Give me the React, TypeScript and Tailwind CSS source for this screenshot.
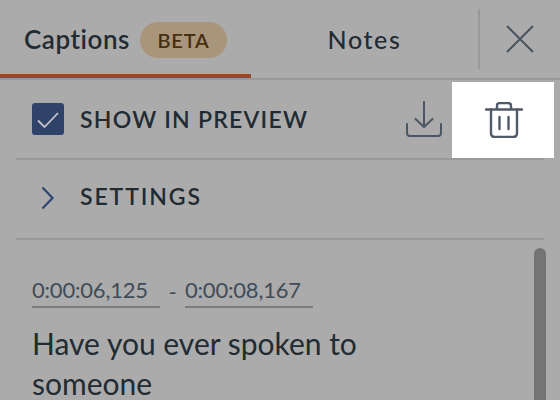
import React from 'react';

const Check = () => (
  <svg width="32" height="32" viewBox="0 0 32 32" fill="none" stroke="#c3c6cb" strokeWidth="1.8">
    <path d="M6 17.5 L12.5 24 L26 10" />
  </svg>
);

const Chevron = () => (
  <svg width="14" height="24" viewBox="0 0 14 24" fill="none" stroke="#2f4570" strokeWidth="2.2">
    <path d="M1.5 1.5 L11.5 12 L1.5 22.5" />
  </svg>
);

const CloseIcon = () => (
  <svg width="28" height="28" viewBox="0 0 28 28" fill="none" stroke="#4b5662" strokeWidth="2.2">
    <path d="M1 1 L27 27 M27 1 L1 27" />
  </svg>
);

const DownloadIcon = () => (
  <svg width="36" height="36" viewBox="0 0 36 36" fill="none" stroke="#4b5662" strokeWidth="2" strokeLinecap="round" strokeLinejoin="round">
    <path d="M18 1 V26 M9.5 18 L18 26 L26.5 18" />
    <path d="M1 23 V32 Q1 35 4 35 H32 Q35 35 35 32 V23" />
  </svg>
);

const TrashIcon = () => (
  <svg width="38" height="36" viewBox="0 0 38 36" fill="none" stroke="#4f5b68" strokeWidth="2.4" strokeLinecap="round" strokeLinejoin="round">
    <path d="M1 7.5 H37" />
    <path d="M6 7.5 V31 Q6 35 10 35 H28 Q32 35 32 31 V7.5" />
    <path d="M12 7 V4 Q12 1 15 1 H23 Q26 1 26 4 V7" />
    <path d="M14.5 15 V27 M23.5 15 V27" />
  </svg>
);

export default function App() {
  return (
    <div className="w-[560px] h-[400px] overflow-hidden bg-[#ababab] text-[#222b33] font-['Lato','Noto_Sans',sans-serif]">
      <div className="flex h-[80px] border-b-2 border-[#999999]">
        <div className="w-[251px] h-[78px] border-b-4 border-[#96492a] flex items-center pl-[24px] gap-[10px] pt-[5px]">
          <span className="text-[26px] font-semibold tracking-[0.55px]">Captions</span>
          <span className="w-[87px] h-[36px] rounded-full bg-[#a8957a] text-[#47300f] text-[20px] font-semibold tracking-[0.8px] flex items-center justify-center">
            BETA
          </span>
        </div>
        <div className="w-[227px] flex items-center justify-center pt-[2px]">
          <span className="text-[25px] font-medium tracking-[1.6px]">Notes</span>
        </div>
        <div className="flex-1 flex items-start pt-[9px]">
          <div className="w-[2px] h-[60px] bg-[#999999]" />
          <div className="ml-[26px] mt-[16px]">
            <CloseIcon />
          </div>
        </div>
      </div>

      <div className="mx-4 h-[80px] border-b-2 border-[#999999] flex items-start pl-4">
        <div className="mt-[23px] w-8 h-8 rounded-[3px] bg-[#2f4369]">
          <Check />
        </div>
        <span className="ml-4 mt-[23px] text-[23px] leading-[32px] font-semibold tracking-[1.25px] whitespace-nowrap">SHOW IN PREVIEW</span>
        <div className="ml-auto mt-[21px] mr-[10px]">
          <DownloadIcon />
        </div>
        <button className="mt-[2px] mr-[-10px] w-[102px] h-[76px] bg-white flex items-center justify-center pl-[1px]">
          <TrashIcon />
        </button>
      </div>

      <div className="mx-4 h-[80px] border-b-2 border-[#999999] flex items-center pl-[25px] pb-[2px]">
        <Chevron />
        <span className="ml-[25px] text-[23px] font-semibold tracking-[1.9px] -translate-y-[2px]">SETTINGS</span>
      </div>

      <div className="flex pl-8 pr-[14px]">
        <div className="flex-1">
          <div className="flex items-start mt-[34px]">
            <span className="w-[128px] h-[34px] border-b-2 border-[#7d7d7d] text-[#404c58] text-[22px] leading-[32px] tracking-[-0.2px] whitespace-nowrap">0:00:06,125</span>
            <span className="w-[25px] text-center text-[#404c58] text-[22px] leading-[36px]">-</span>
            <span className="w-[128px] h-[34px] border-b-2 border-[#7d7d7d] text-[#404c58] text-[22px] leading-[32px] tracking-[-0.2px] whitespace-nowrap">0:00:08,167</span>
          </div>
          <p className="mt-[13px] w-[400px] text-[30px] leading-[40px]">Have you ever spoken to someone</p>
        </div>
        <div className="mt-[8px] w-3 h-[200px] rounded-full bg-[#747474]" />
      </div>
    </div>
  );
}
